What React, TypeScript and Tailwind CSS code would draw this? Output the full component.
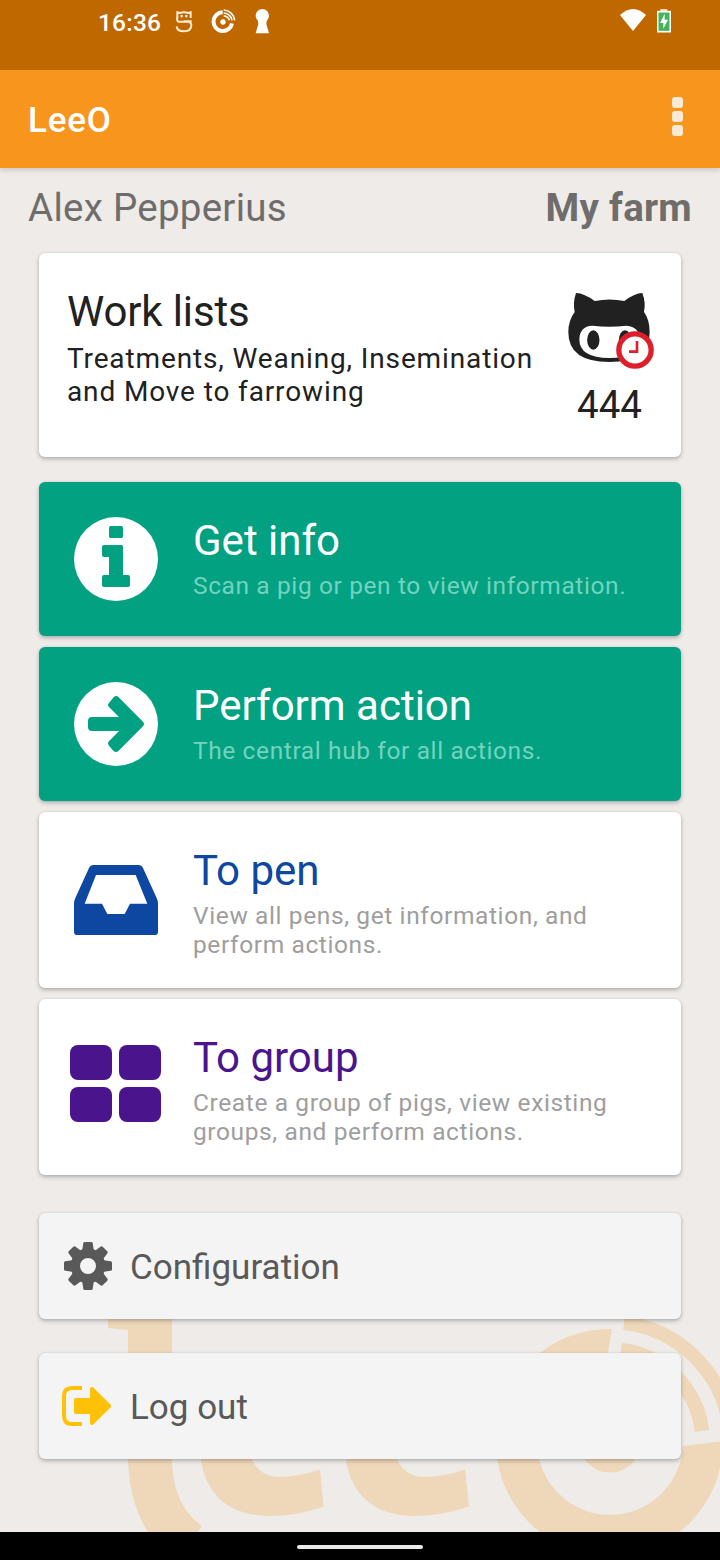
import type { ReactNode } from "react";

function StatusBar() {
  return (
    <div className="flex h-[70px] shrink-0 items-start bg-[#c06800] text-white">
      <span className="ml-[98px] mt-[8px] w-[66px] text-[24.5px] font-medium leading-[29px] tracking-[0.2px]">16:36</span>
      <svg className="ml-[11px] mt-[10px]" width="18" height="23" viewBox="0 0 54 69" fill="none" stroke="#fbe9d2" strokeWidth="6">
        <path d="M7 24V7L15 9Q27 5 39 9L47 7V24" />
        <path d="M7 20Q4 35 12 35H38Q49 35 49 46Q49 64 27 64Q6 64 5 49M50 34H26" />
        <path d="M20 15V22M34 15V22" stroke="#fff" />
      </svg>
      <svg className="ml-[18px] mt-[9px]" width="25" height="25" viewBox="0 0 75 75" fill="none" stroke="#fff">
        <path d="M35 10A28 28 0 1 0 63 43" strokeWidth="12" />
        <circle cx="36" cy="39" r="8" fill="#fff" stroke="none" />
        <path d="M38 3A34 34 0 0 1 71 34M38 12A26 26 0 0 1 63 34M38 21A18 18 0 0 1 55 34" strokeWidth="5" />
      </svg>
      <svg className="ml-[18px] mt-[9px]" width="16" height="25" viewBox="0 0 48 75" fill="#fff">
        <circle cx="25" cy="20" r="20" />
        <path d="M11 27H39L37 45L45 73H5L13 45Z" />
      </svg>
      <svg className="ml-auto mt-[9px]" width="26" height="23" viewBox="0 0 78 69" fill="#fff">
        <path d="M0 18Q39 -18 78 18L39 66Z" />
      </svg>
      <svg className="ml-[11px] mr-[49px] mt-[9px]" width="14" height="24" viewBox="0 0 42 72">
        <path d="M10 0H31V6H10Z" fill="#f8d9b7" />
        <rect x="2" y="8" width="38" height="60" fill="#43b45e" stroke="#fff" strokeWidth="5" />
        <path d="M23 14L9 42H19V59L33 32H23Z" fill="#fff" />
      </svg>
    </div>
  );
}

function Cat() {
  return (
    <svg className="shrink-0" width="87" height="78" viewBox="83 66 261 234">
      <path fill="#212121" d="M107 69Q132 70 163 93Q208 84 252 93Q282 70 306 69Q317 98 311 126Q328 149 328 187Q328 276 207 276Q84 276 84 187Q84 151 103 126Q97 98 107 69Z" />
      <path fill="#fff" d="M156 167Q207 173 258 167Q298 169 298 211Q297 264 207 264Q117 264 117 208Q118 169 156 167Z" />
      <ellipse cx="159" cy="210" rx="18.500" ry="29" fill="#212121" />
      <ellipse cx="254" cy="210" rx="18.500" ry="29" fill="#212121" />
      <circle cx="284" cy="240" r="48.500" fill="#fff" stroke="#dc1f2b" strokeWidth="16" />
      <path d="M290 213V245H266" fill="none" stroke="#dc1f2b" strokeWidth="8" />
    </svg>
  );
}

function InfoIcon() {
  return (
    <svg width="84" height="84" viewBox="0 0 252 252">
      <circle cx="126" cy="126" r="126" fill="#fff" />
      <g fill="#01a182">
        <rect x="105" y="27" width="42" height="36" rx="5" />
        <path d="M90 84H142Q147 84 147 89V174H162Q168 174 168 180V204Q168 210 162 210H90Q84 210 84 204V180Q84 174 90 174H105V120H90Q84 120 84 114V90Q84 84 90 84Z" />
      </g>
    </svg>
  );
}

function ArrowIcon() {
  return (
    <svg width="84" height="84" viewBox="0 0 252 252">
      <circle cx="126" cy="126" r="126" fill="#fff" />
      <path fill="#01a182" d="M54 105H135L105 75Q99 69 105 63L119 46Q126 38 134 46L207 119Q213 126 207 133L134 206Q126 214 118 206L105 191Q99 184 105 178L135 147H54Q42 147 42 135V117Q42 105 54 105Z" />
    </svg>
  );
}

function InboxIcon() {
  return (
    <svg width="84" height="70" viewBox="0 0 252 210">
      <path fill="#0d47a1" fillRule="evenodd" d="M59 0H193Q203 0 207 9L248 99Q252 107 252 116V200Q252 210 242 210H10Q0 210 0 200V116Q0 107 4 99L45 9Q49 0 59 0ZM66 30L32 116H84L100 147H152L168 116H220L185 30Z" />
    </svg>
  );
}

function GroupIcon() {
  return (
    <span className="mb-[7px] mr-[1px] grid grid-cols-2 gap-[7px]">
      {[0, 1, 2, 3].map((n) => (
        <span key={n} className="h-[35px] w-[42px] rounded-[8px] bg-[#4a148c]" />
      ))}
    </span>
  );
}

function Gear() {
  return (
    <svg width="48" height="48" viewBox="0 0 48 48" fill="#595959">
      {[0, 45, 90, 135, 180, 225, 270, 315].map((a) => (
        <path key={a} transform={`rotate(${a} 24 24)`} d="M18 10L19.300 1.200Q19.500 0 20.700 0H27.300Q28.500 0 28.700 1.200L30 10Z" />
      ))}
      <circle cx="24" cy="24" r="12.700" fill="none" stroke="#595959" strokeWidth="9.400" />
    </svg>
  );
}

function Exit() {
  return (
    <svg width="49" height="40" viewBox="0 0 147 120">
      <path d="M60 6H30Q6 6 6 30V90Q6 114 30 114H60" fill="none" stroke="#ffc107" strokeWidth="12" />
      <path fill="#ffc107" d="M41 36H84V8Q86 0 93 4L146 56Q149 60 146 64L93 116Q87 120 84 112V84H41Q36 84 36 79V41Q36 36 41 36Z" />
    </svg>
  );
}

function Watermark() {
  return (
    <svg className="absolute bottom-0 left-0" width="720" height="332" viewBox="0 1200 720 332" fill="#efd8b9">
      <path d="M108 1300H172V1455C172 1490 182 1511 202 1526L198 1532H148C135 1512 128 1485 128 1455V1330L108 1328Z" />
      <path d="M200 1440C198 1485 222 1516 269 1516Q297 1516 323.500 1506.500L320 1469.500Q298 1477 280 1477Q251 1477 247 1440Z" />
      <path d="M345 1440C343 1485 367 1516 414 1516Q442 1516 469 1506.500L465 1469.500Q443 1477 425 1477Q396 1477 392 1440Z" />
      <circle cx="610" cy="1441.500" r="31" />
      <path d="M612 1329A113.500 113.500 0 1 0 723 1441L683 1446A73 73 0 1 1 605 1369Z" />
      <g fill="none" stroke="#efd8b9">
        <path d="M624 1323A120 120 0 0 1 729 1424" strokeWidth="14" />
        <path d="M621 1350A92.500 92.500 0 0 1 702 1431" strokeWidth="14.500" />
      </g>
    </svg>
  );
}

const shadow = "rounded-[6px] shadow-[0_2px_4px_rgba(0,0,0,0.25),0_0_2px_rgba(0,0,0,0.1)]";

interface CardProps {
  icon: ReactNode;
  title: string;
  lines: string[];
  className: string;
  titleClass: string;
  textClass: string;
}

function ActionCard({ icon, title, lines, className, titleClass, textClass }: CardProps) {
  return (
    <button className={`flex w-full items-center text-left ${shadow} ${className}`}>
      <span className="flex w-[154px] shrink-0 justify-center">{icon}</span>
      <span className="flex flex-col self-start pt-[34px]">
        <span className={`text-[42px] leading-[49px] ${titleClass}`}>{title}</span>
        <span className={`mt-[6px] text-[24.5px] leading-[29px] tracking-[0.61px] ${textClass}`}>
          {lines.map((line) => (
            <span key={line} className="block whitespace-nowrap">{line}</span>
          ))}
        </span>
      </span>
    </button>
  );
}

function SettingRow({ icon, label }: { icon: ReactNode; label: string }) {
  return (
    <button className={`flex h-[106px] w-full items-center bg-[#f4f4f4] text-left ${shadow}`}>
      <span className="ml-[23px] flex w-[68px] items-center">{icon}</span>
      <span className="pt-[2px] text-[35px] leading-[41px] text-[#595959]">{label}</span>
    </button>
  );
}

export default function App() {
  return (
    <div className="flex h-[1560px] w-[720px] flex-col overflow-hidden bg-[#eeebe8] font-['Roboto',sans-serif]">
      <StatusBar />
      <header className="relative flex h-[98px] shrink-0 items-center justify-between bg-[#f8951d] pl-[28px] pr-[37px] shadow-[0_3px_4px_rgba(0,0,0,0.12)]">
        <h1 className="pt-[2px] text-[35px] font-medium leading-[41px] tracking-[0.8px] text-white">LeeO</h1>
        <div className="mb-[5px] flex flex-col gap-[3px]">
          <i className="size-[11px] rounded-[3px] bg-[#f9ead6]" />
          <i className="size-[11px] rounded-[3px] bg-[#f9ead6]" />
          <i className="size-[11px] rounded-[3px] bg-[#f9ead6]" />
        </div>
      </header>
      <main className="relative flex-1">
        <Watermark />
        <div className="relative flex flex-col px-[39px]">
          <div className="-mx-[11px] flex h-[85px] items-start justify-between pt-[17px] text-[38.5px] leading-[45px] tracking-[0.27px] text-[#6f6d6b]">
            <span>Alex Pepperius</span>
            <span className="font-bold">My farm</span>
          </div>
          <section className={`flex h-[204px] justify-between bg-white px-[28px] text-[#212121] ${shadow}`}>
            <div className="pt-[34px]">
              <h2 className="text-[42px] leading-[49px] tracking-[-0.15px]">Work lists</h2>
              <p className="mt-[6px] whitespace-nowrap text-[28px] leading-[33px] tracking-[0.87px]">
                Treatments, Weaning, Insemination<br />and Move to farrowing
              </p>
            </div>
            <div className="-mr-[2px] flex w-[87px] flex-col items-center pt-[39px]">
              <Cat />
              <span className="mt-[12px] pr-[4px] text-[38.5px] leading-[45px]">444</span>
            </div>
          </section>
          <div className="mt-[25px] flex flex-col gap-[11px]">
            <ActionCard icon={<InfoIcon />} title="Get info" lines={["Scan a pig or pen to view information."]} className="h-[154px] bg-[#01a182]" titleClass="text-white" textClass="text-[#73d3bf]" />
            <ActionCard icon={<ArrowIcon />} title="Perform action" lines={["The central hub for all actions."]} className="h-[154px] bg-[#01a182]" titleClass="text-white" textClass="text-[#73d3bf]" />
            <ActionCard icon={<InboxIcon />} title="To pen" lines={["View all pens, get information, and", "perform actions."]} className="h-[176px] bg-white" titleClass="text-[#0d47a1]" textClass="text-[#9e9e9e]" />
            <ActionCard icon={<GroupIcon />} title="To group" lines={["Create a group of pigs, view existing", "groups, and perform actions."]} className="h-[176px] bg-white" titleClass="text-[#4a148c]" textClass="text-[#9e9e9e]" />
          </div>
          <div className="mt-[38px] flex flex-col gap-[34px]">
            <SettingRow icon={<span className="pl-[2px]"><Gear /></span>} label="Configuration" />
            <SettingRow icon={<Exit />} label="Log out" />
          </div>
        </div>
      </main>
      <footer className="flex h-[28px] shrink-0 items-center justify-center bg-black pt-[2px]">
        <div className="h-[4px] w-[126px] rounded-full bg-[#e8e8e8]" />
      </footer>
    </div>
  );
}
